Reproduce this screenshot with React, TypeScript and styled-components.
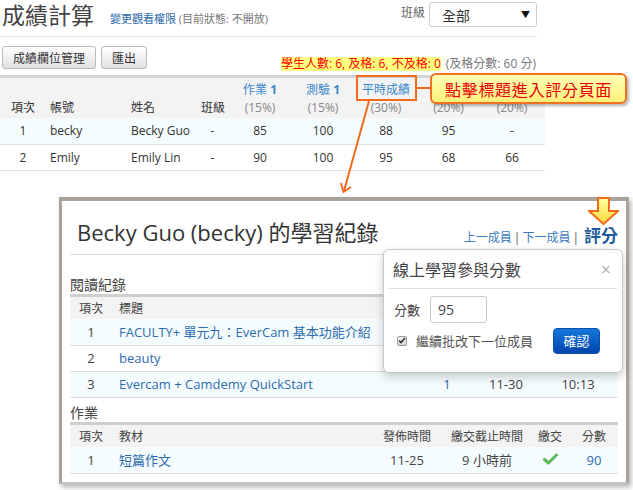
import React from 'react';
import styled, { createGlobalStyle } from 'styled-components';

const GlobalStyle = createGlobalStyle`
  html, body { margin: 0; padding: 0; background: #fff; }
  body { font-family: "Open Sans", "Noto Sans CJK TC", sans-serif; color: #333; }
  * { box-sizing: border-box; }
`;

const ORANGE = '#f26b1d';

const Page = styled.div`
  position: relative;
  width: 633px;
  height: 490px;
  overflow: hidden;
  background: #fff;
`;

const Main = styled.div`
  width: 545px;
`;

const Header = styled.div`
  display: flex;
  align-items: flex-start;
  width: 537px;
  height: 37px;
  border-bottom: 1px solid #e2e2e2;
`;

const Title = styled.h1`
  margin: 0;
  padding-left: 2px;
  font-size: 23px;
  font-weight: normal;
  line-height: 30px;
  color: #444;
`;

const Perm = styled.div`
  margin: 12px 0 0 16px;
  font-size: 11px;
  line-height: 14px;
  color: #777;
`;

const PermLink = styled.a`
  color: #2a6aa8;
  text-decoration: none;
`;

const ClassPicker = styled.div`
  margin-left: auto;
  display: flex;
  align-items: flex-start;
  gap: 4px;
  padding-top: 2px;
`;

const PickerLabel = styled.span`
  font-size: 12px;
  line-height: 22px;
  color: #666;
`;

const Select = styled.div`
  width: 108px;
  height: 25px;
  border: 1px solid #ccc;
  border-radius: 3px;
  display: flex;
  align-items: center;
  justify-content: space-between;
  padding: 0 6px 0 12px;
  font-size: 14px;
  color: #333;
`;

const Caret = styled.span`
  font-size: 9px;
  color: #111;
`;

const Toolbar = styled.div`
  display: flex;
  align-items: flex-start;
  height: 38px;
  padding: 9px 9px 0 2px;
`;

const Button = styled.button`
  height: 23px;
  margin-right: 5px;
  padding: 0 10px;
  border: 1px solid #bbb;
  border-radius: 3px;
  background: linear-gradient(#ffffff, #e2e2e2);
  font-family: inherit;
  font-size: 12px;
  color: #333;
`;

const Stats = styled.div`
  margin: 11px 0 0 auto;
  font-size: 12px;
  line-height: 14px;
  color: #777;
  white-space: nowrap;
`;

const Warn = styled.span`
  display: inline-block;
  background: #ffff80;
  color: #f00;
  margin-right: 5px;
`;

const Table = styled.table`
  width: 100%;
  border-collapse: collapse;
  table-layout: fixed;
  border-top: 3px solid #d4d4d4;
`;

const Col = styled.col<{ $w?: number }>`
  width: ${(p) => (p.$w ? `${p.$w}px` : 'auto')};
`;

const Th = styled.th<{ $align?: string }>`
  background: #f3f3f3;
  vertical-align: bottom;
  padding: 3px 4px 1px;
  line-height: 18px;
  font-size: 12px;
  font-weight: normal;
  color: #333;
  text-align: ${(p) => p.$align || 'center'};
  white-space: nowrap;
`;

const HeadLink = styled.a`
  display: block;
  min-height: 18px;
  color: #3a88cc;
  text-decoration: none;
  b { font-weight: bold; }
`;

const Weight = styled.span`
  display: block;
  color: #888;
`;

const Tr = styled.tr<{ $odd?: boolean }>`
  background: ${(p) => (p.$odd ? '#f4fcfe' : '#fff')};
`;

const Td = styled.td<{ $align?: string }>`
  height: 26px;
  padding: 0 4px;
  border-bottom: 1px solid #e0e0e0;
  font-size: 12px;
  color: #333;
  text-align: ${(p) => p.$align || 'center'};
  white-space: nowrap;
`;

const Panel = styled.div`
  position: relative;
  margin: 26px 0 0 59px;
  width: 570px;
  height: 287px;
  border: 3px solid #aaa39b;
  border-top-width: 4px;
  border-bottom: 2px solid #c9c5c0;
  box-shadow: 2px 3px 5px rgba(0, 0, 0, 0.3);
  padding: 0 8px;
  background: #fff;
`;

const PanelHead = styled.div`
  display: flex;
  align-items: flex-end;
  justify-content: space-between;
  height: 54px;
  padding: 0 0 8px 7px;
  border-bottom: 1px solid #ddd;
`;

const PanelTitle = styled.h2`
  margin: 0;
  font-size: 22px;
  font-weight: normal;
  line-height: 28px;
  color: #333;
`;

const Nav = styled.div`
  display: flex;
  align-items: baseline;
  gap: 2px;
  font-size: 12px;
  color: #555;
`;

const NavLink = styled.a`
  color: #3b7bbf;
  text-decoration: none;
`;

const GradeLink = styled.a`
  position: relative;
  margin-left: 3px;
  font-size: 17px;
  font-weight: bold;
  color: #1d5a9c;
  text-decoration: none;
  line-height: 20px;
`;

const DownArrow = styled.svg`
  position: absolute;
  left: 4px;
  bottom: 21px;
`;

const SectionLabel = styled.div<{ $top: number }>`
  margin: ${(p) => p.$top}px 0 1px;
  font-size: 14px;
  line-height: 16px;
  color: #444;
`;

const SubTable = styled.table`
  width: 100%;
  border-collapse: collapse;
  table-layout: fixed;
  border-top: 3px solid #cfcfcf;
`;

const SubTh = styled.th<{ $align?: string }>`
  height: 24px;
  padding: 0 7px;
  background: #f3f3f3;
  font-size: 12px;
  font-weight: normal;
  color: #444;
  text-align: ${(p) => p.$align || 'center'};
  white-space: nowrap;
`;

const SubTd = styled.td<{ $align?: string; $link?: boolean }>`
  height: 26px;
  padding: 0 7px;
  border-bottom: 1px solid #ddd;
  font-size: 13px;
  color: ${(p) => (p.$link ? '#2d6cb0' : '#444')};
  text-align: ${(p) => p.$align || 'center'};
  white-space: nowrap;
  overflow: hidden;
`;

const Popover = styled.div`
  position: absolute;
  left: 321px;
  top: 48px;
  width: 240px;
  height: 124px;
  border: 1px solid #c8c8c8;
  border-radius: 6px;
  background: #fff;
  box-shadow: 0 4px 10px rgba(0, 0, 0, 0.2);
`;

const PopHead = styled.div`
  display: flex;
  align-items: center;
  justify-content: space-between;
  height: 39px;
  margin: 0 5px;
  padding: 0 6px 0 4px;
  border-bottom: 1px solid #ddd;
`;

const PopTitle = styled.span`
  font-size: 16px;
  color: #444;
`;

const Close = styled.span`
  font-size: 18px;
  color: #b0b0b0;
`;

const PopBody = styled.div`
  padding: 7px 10px 0;
`;

const FieldRow = styled.div`
  display: flex;
  align-items: center;
  gap: 10px;
  font-size: 13px;
  color: #444;
`;

const ScoreInput = styled.div`
  width: 57px;
  height: 27px;
  border: 1px solid #ccc;
  border-radius: 3px;
  padding-left: 7px;
  font-size: 14px;
  line-height: 25px;
  color: #444;
`;

const CheckRow = styled.div`
  display: flex;
  align-items: center;
  margin-top: 5px;
  font-size: 13px;
  color: #555;
`;

const CheckBox = styled.span`
  display: inline-flex;
  align-items: center;
  justify-content: center;
  width: 10px;
  height: 10px;
  margin: 0 9px 0 3px;
  border: 1px solid #999;
  border-radius: 2px;
  background: linear-gradient(#f4f4f4, #d8d8d8);
`;

const Confirm = styled.button`
  margin: 0 12px 0 auto;
  width: 47px;
  height: 26px;
  border: 1px solid #0a4fa8;
  border-radius: 4px;
  background: linear-gradient(#1577da, #0046ad);
  color: #fff;
  font-family: inherit;
  font-size: 13px;
`;

const Overlay = styled.svg`
  position: absolute;
  left: 0;
  top: 0;
  pointer-events: none;
`;

const Callout = styled.div`
  position: absolute;
  left: 430px;
  top: 73px;
  width: 197px;
  height: 31px;
  display: flex;
  align-items: center;
  justify-content: center;
  border: 2px solid #f07122;
  border-radius: 6px;
  background: linear-gradient(#ffffb8, #fff07a);
  box-shadow: 2px 2px 3px rgba(0, 0, 0, 0.3);
  color: #e8000b;
  font-size: 16px;
  letter-spacing: 0.7px;
`;

// header names of the last two columns sit under the callout in the picture
const students = [
  { no: 1, account: 'becky', name: 'Becky Guo', cls: '-', s: ['85', '100', '88', '95', '-'] },
  { no: 2, account: 'Emily', name: 'Emily Lin', cls: '-', s: ['90', '100', '95', '68', '66'] },
];

// the popover hides the last columns of the first two rows
const readings = [
  { no: 1, title: 'FACULTY+ 單元九：EverCam 基本功能介紹', count: '', date: '', time: '' },
  { no: 2, title: 'beauty', count: '', date: '', time: '' },
  { no: 3, title: 'Evercam + Camdemy QuickStart', count: '1', date: '11-30', time: '10:13' },
];

const Check = () => (
  <svg width="15" height="12" viewBox="0 0 15 12">
    <path d="M1.5 6.5 L5.5 10 L13.5 2" fill="none" stroke="#5cb85c" strokeWidth="3" strokeLinecap="round" strokeLinejoin="round" />
  </svg>
);

const App: React.FC = () => {
  return (
    <Page>
      <GlobalStyle />
      <Main>
        <Header>
          <Title>成績計算</Title>
          <Perm>
            <PermLink>變更觀看權限</PermLink> (目前狀態: 不開放)
          </Perm>
          <ClassPicker>
            <PickerLabel>班級</PickerLabel>
            <Select>
              全部<Caret>▼</Caret>
            </Select>
          </ClassPicker>
        </Header>
        <Toolbar>
          <Button>成績欄位管理</Button>
          <Button>匯出</Button>
          <Stats>
            <Warn>學生人數: 6, 及格: 6, 不及格: 0</Warn>(及格分數: 60 分)
          </Stats>
        </Toolbar>
        <Table>
          <colgroup>
            <Col $w={46} />
            <Col $w={81} />
            <Col $w={70} />
            <Col $w={31} />
            <Col $w={64} />
            <Col $w={62} />
            <Col $w={64} />
            <Col $w={61} />
            <Col $w={66} />
          </colgroup>
          <thead>
            <tr>
              <Th>項次</Th>
              <Th $align="left">帳號</Th>
              <Th $align="left">姓名</Th>
              <Th>班級</Th>
              <Th>
                <HeadLink>作業 <b>1</b></HeadLink>
                <Weight>(15%)</Weight>
              </Th>
              <Th>
                <HeadLink>測驗 <b>1</b></HeadLink>
                <Weight>(15%)</Weight>
              </Th>
              <Th>
                <HeadLink>平時成績</HeadLink>
                <Weight>(30%)</Weight>
              </Th>
              <Th>
                <HeadLink />
                <Weight>(20%)</Weight>
              </Th>
              <Th>
                <HeadLink />
                <Weight>(20%)</Weight>
              </Th>
            </tr>
          </thead>
          <tbody>
            {students.map((st, i) => (
              <Tr key={st.no} $odd={i % 2 === 0}>
                <Td>{st.no}</Td>
                <Td $align="left">{st.account}</Td>
                <Td $align="left">{st.name}</Td>
                <Td>{st.cls}</Td>
                {st.s.map((v, j) => (
                  <Td key={j}>{v}</Td>
                ))}
              </Tr>
            ))}
          </tbody>
        </Table>
      </Main>

      <Panel>
        <PanelHead>
          <PanelTitle>Becky Guo (becky) 的學習紀錄</PanelTitle>
          <Nav>
            <NavLink>上一成員</NavLink>|<NavLink>下一成員</NavLink>|
            <GradeLink>
              <DownArrow width="31" height="28" viewBox="0 0 31 28">
                <defs>
                  <linearGradient id="yl" x1="0" y1="0" x2="0" y2="1">
                    <stop offset="0" stopColor="#ffffa0" />
                    <stop offset="1" stopColor="#ffd83a" />
                  </linearGradient>
                </defs>
                <polygon
                  points="10,1 21,1 21,14 30,14 15.5,27 1,14 10,14"
                  fill="url(#yl)"
                  stroke={ORANGE}
                  strokeWidth="2"
                  strokeLinejoin="miter"
                />
              </DownArrow>
              評分
            </GradeLink>
          </Nav>
        </PanelHead>

        <SectionLabel $top={22}>閱讀紀錄</SectionLabel>
        <SubTable>
          <colgroup>
            <Col $w={42} />
            <Col />
            <Col $w={54} />
            <Col $w={64} />
            <Col $w={80} />
          </colgroup>
          <thead>
            <tr>
              <SubTh>項次</SubTh>
              <SubTh $align="left">標題</SubTh>
              <SubTh />
              <SubTh />
              <SubTh />
            </tr>
          </thead>
          <tbody>
            {readings.map((r, i) => (
              <Tr key={r.no} $odd={i % 2 === 0}>
                <SubTd>{r.no}</SubTd>
                <SubTd $align="left" $link>
                  {r.title}
                </SubTd>
                <SubTd $link>{r.count}</SubTd>
                <SubTd>{r.date}</SubTd>
                <SubTd>{r.time}</SubTd>
              </Tr>
            ))}
          </tbody>
        </SubTable>

        <SectionLabel $top={7}>作業</SectionLabel>
        <SubTable>
          <colgroup>
            <Col $w={42} />
            <Col />
            <Col $w={74} />
            <Col $w={86} />
            <Col $w={40} />
            <Col $w={48} />
          </colgroup>
          <thead>
            <tr>
              <SubTh>項次</SubTh>
              <SubTh $align="left">教材</SubTh>
              <SubTh>發佈時間</SubTh>
              <SubTh>繳交截止時間</SubTh>
              <SubTh>繳交</SubTh>
              <SubTh>分數</SubTh>
            </tr>
          </thead>
          <tbody>
            <Tr $odd>
              <SubTd>1</SubTd>
              <SubTd $align="left" $link>
                短篇作文
              </SubTd>
              <SubTd>11-25</SubTd>
              <SubTd>9 小時前</SubTd>
              <SubTd>
                <Check />
              </SubTd>
              <SubTd $link>90</SubTd>
            </Tr>
          </tbody>
        </SubTable>

        <Popover>
          <PopHead>
            <PopTitle>線上學習參與分數</PopTitle>
            <Close>×</Close>
          </PopHead>
          <PopBody>
            <FieldRow>
              分數
              <ScoreInput>95</ScoreInput>
            </FieldRow>
            <CheckRow>
              <CheckBox>
                <svg width="8" height="7" viewBox="0 0 8 7">
                  <path d="M1 3.5 L3 5.5 L7 1" fill="none" stroke="#333" strokeWidth="1.6" />
                </svg>
              </CheckBox>
              繼續批改下一位成員
              <Confirm>確認</Confirm>
            </CheckRow>
          </PopBody>
        </Popover>
      </Panel>

      <Overlay width="633" height="490" viewBox="0 0 633 490">
        <rect x="357" y="76" width="59" height="24" fill="none" stroke={ORANGE} strokeWidth="2" />
        <line x1="416" y1="88" x2="431" y2="88" stroke={ORANGE} strokeWidth="2" />
        <line x1="369" y1="101" x2="344" y2="191" stroke={ORANGE} strokeWidth="2" />
        <polyline points="341,183 343.5,192 351,187" fill="none" stroke={ORANGE} strokeWidth="2" />
      </Overlay>
      <Callout>點擊標題進入評分頁面</Callout>
    </Page>
  );
};

export default App;
